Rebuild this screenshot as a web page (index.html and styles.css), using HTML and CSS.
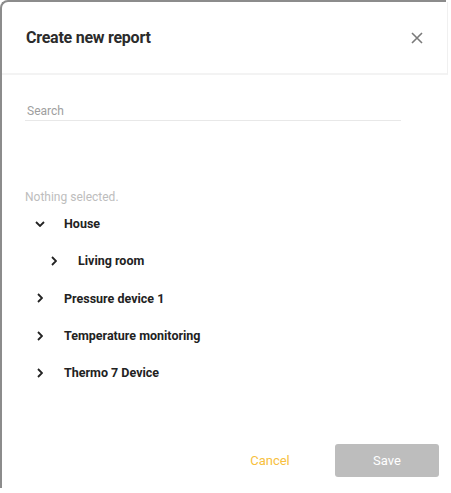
FILE: index.html
```html
<!DOCTYPE html>
<html lang="en">
<head>
    <meta charset="UTF-8">
    <title>Create new report</title>
    <link rel="stylesheet" href="styles.css">
</head>
<body>
    <div class="frame">
        <div class="dialog">
            <div class="dialog-header">
                <h2>Create new report</h2>
                <button class="close" aria-label="Close">
                    <svg width="12" height="12" viewBox="0 0 12 12">
                        <path d="M1 1 L11 11 M11 1 L1 11" stroke="#7a7a7a" stroke-width="1.6" fill="none"/>
                    </svg>
                </button>
            </div>

            <div class="dialog-body">
                <input type="text" class="search" placeholder="Search">
                <p class="selection">Nothing selected.</p>

                <ul class="tree">
                    <li class="node open">
                        <span class="chev">
                            <svg width="10" height="6" viewBox="0 0 10 6"><path d="M1 1 L5 5 L9 1" stroke="#222" stroke-width="1.8" fill="none"/></svg>
                        </span>
                        <span class="label">House</span>
                    </li>
                    <li class="node child">
                        <span class="chev">
                            <svg width="6" height="10" viewBox="0 0 6 10"><path d="M1 1 L5 5 L1 9" stroke="#222" stroke-width="1.8" fill="none"/></svg>
                        </span>
                        <span class="label">Living room</span>
                    </li>
                    <li class="node">
                        <span class="chev">
                            <svg width="6" height="10" viewBox="0 0 6 10"><path d="M1 1 L5 5 L1 9" stroke="#222" stroke-width="1.8" fill="none"/></svg>
                        </span>
                        <span class="label">Pressure device 1</span>
                    </li>
                    <li class="node">
                        <span class="chev">
                            <svg width="6" height="10" viewBox="0 0 6 10"><path d="M1 1 L5 5 L1 9" stroke="#222" stroke-width="1.8" fill="none"/></svg>
                        </span>
                        <span class="label">Temperature monitoring</span>
                    </li>
                    <li class="node">
                        <span class="chev">
                            <svg width="6" height="10" viewBox="0 0 6 10"><path d="M1 1 L5 5 L1 9" stroke="#222" stroke-width="1.8" fill="none"/></svg>
                        </span>
                        <span class="label">Thermo 7 Device</span>
                    </li>
                </ul>
            </div>

            <div class="dialog-footer">
                <button class="btn-cancel">Cancel</button>
                <button class="btn-save" disabled>Save</button>
            </div>
        </div>
    </div>
</body>
</html>
```

FILE: styles.css
```css
body {
    margin: 0;
    background-color: #ffffff;
    font-family: Roboto, 'Liberation Sans', sans-serif;
    color: #222;
}

.frame {
    width: 444px;
    height: 486px;
    border-top: 2px solid #8c8c8c;
    border-left: 2px solid #8c8c8c;
    border-top-left-radius: 8px;
}

.dialog {
    width: 446px;
}

.dialog-header {
    display: flex;
    justify-content: space-between;
    align-items: center;
    height: 71px;
    padding: 0 24px 0 24px;
    border-bottom: 2px solid #f3f3f3;
    border-right: 1px solid #f0f0f0;
}

.dialog-header h2 {
    margin: 0;
    font-size: 16px;
    font-weight: bold;
    letter-spacing: -0.25px;
    color: #2b2b2b;
}

.close {
    background: none;
    border: none;
    padding: 0;
    display: flex;
    cursor: pointer;
}

.dialog-body {
    padding: 0 23px;
}

.search {
    display: block;
    box-sizing: border-box;
    width: 376px;
    height: 20px;
    margin-top: 26px;
    padding: 1px 2px 0 2px;
    border: none;
    border-bottom: 1px solid #e8e8e8;
    font-family: inherit;
    font-size: 12px;
    outline: none;
}

.search::placeholder {
    color: #9e9e9e;
}

.selection {
    margin: 69px 0 0 0;
    font-size: 12px;
    line-height: 15px;
    color: #bdbdbd;
}

.tree {
    list-style-type: none;
    margin: 0;
    padding: 0;
}

.node {
    display: flex;
    align-items: center;
    height: 37.3px;
    padding-left: 9px;
}

.node.child {
    padding-left: 23px;
}

.chev {
    display: flex;
    justify-content: center;
    width: 12px;
    margin-right: 18px;
}

.label {
    font-size: 12.5px;
    font-weight: bold;
    color: #222;
}

.dialog-footer {
    display: flex;
    justify-content: flex-end;
    gap: 13px;
    padding: 53px 9px 0 0;
}

.dialog-footer button {
    width: 104px;
    height: 33px;
    border: none;
    border-radius: 3px;
    font-family: inherit;
    font-size: 13px;
}

.btn-cancel {
    background: none;
    color: #f7c03e;
    cursor: pointer;
}

.btn-save {
    background-color: #bdbdbd;
    color: #ffffff;
}
```
